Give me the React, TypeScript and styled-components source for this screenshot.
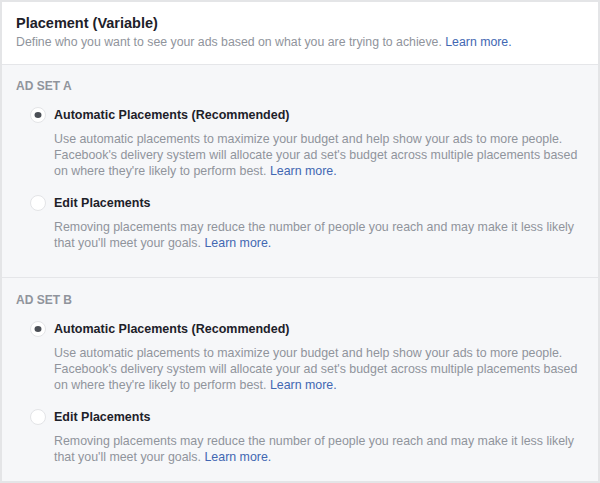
import styled, { createGlobalStyle } from "styled-components";

const GlobalStyle = createGlobalStyle`
  html, body {
    margin: 0;
    padding: 0;
    background: #fff;
  }
  body {
    font-family: "Liberation Sans", Arial, sans-serif;
    -webkit-font-smoothing: antialiased;
  }
`;

const sets = [
  { name: "AD SET A" },
  { name: "AD SET B" },
];

function App() {
  return (
    <>
      <GlobalStyle />
      <Frame>
        <Header>
          <Title>Placement (Variable)</Title>
          <Subtitle>
            Define who you want to see your ads based on what you are trying to
            achieve. <Link href="#">Learn more.</Link>
          </Subtitle>
        </Header>

        {sets.map((set) => (
          <Section key={set.name}>
            <SectionTitle>{set.name}</SectionTitle>

            <Option>
              <Radio checked />
              <OptionBody>
                <Label>Automatic Placements (Recommended)</Label>
                <Desc>
                  Use automatic placements to maximize your budget and help show
                  your ads to more people. Facebook's delivery system will
                  allocate your ad set's budget across multiple placements based
                  on where they're likely to perform best.{" "}
                  <Link href="#">Learn more.</Link>
                </Desc>
              </OptionBody>
            </Option>

            <Option>
              <Radio />
              <OptionBody>
                <Label>Edit Placements</Label>
                <Desc>
                  Removing placements may reduce the number of people you reach
                  and may make it less likely that you'll meet your goals.{" "}
                  <Link href="#">Learn more.</Link>
                </Desc>
              </OptionBody>
            </Option>
          </Section>
        ))}
      </Frame>
    </>
  );
}

export default App;

const Frame = styled.div`
  width: 600px;
  height: 483px;
  box-sizing: border-box;
  border: 2px solid #e4e5e7;
  overflow: hidden;
  background: #f6f7f9;
`;

const Header = styled.div`
  background: #fff;
  padding: 12px 14px 14px;
  border-bottom: 1px solid #e5e6e9;
`;

const Title = styled.div`
  font-size: 14.5px;
  line-height: 18px;
  font-weight: bold;
  color: #1d2129;
`;

const Subtitle = styled.div`
  margin-top: 2px;
  font-size: 12.3px;
  line-height: 16px;
  color: #90949c;
`;

const Link = styled.a`
  color: #4267b2;
  text-decoration: none;
`;

const Section = styled.div`
  padding: 13px 8px 26px 14px;
  & + & {
    border-top: 1px solid #e5e6e9;
    padding-top: 14px;
    padding-bottom: 17px;
  }
`;

const SectionTitle = styled.div`
  font-size: 12px;
  line-height: 16px;
  font-weight: bold;
  color: #90949c;
  margin-bottom: 13px;
`;

const Option = styled.div`
  display: flex;
  gap: 8px;
  padding-left: 14px;
  & + & {
    margin-top: 16px;
  }
`;

const Radio = styled.span<{ checked?: boolean }>`
  flex: none;
  position: relative;
  width: 16px;
  height: 16px;
  box-sizing: border-box;
  border-radius: 50%;
  background: #fff;
  border: 1px solid #e3e4e7;
  &::after {
    content: "";
    display: ${(p) => (p.checked ? "block" : "none")};
    position: absolute;
    left: 50%;
    top: 50%;
    width: 7px;
    height: 6px;
    border-radius: 50%;
    background: #4b4f56;
    transform: translate(-50%, -50%);
  }
`;

const OptionBody = styled.div`
  flex: 1;
`;

const Label = styled.div`
  font-size: 12.5px;
  line-height: 16px;
  font-weight: bold;
  color: #1d2129;
`;

const Desc = styled.div`
  margin-top: 8px;
  font-size: 12.4px;
  line-height: 16px;
  color: #90949c;
`;
